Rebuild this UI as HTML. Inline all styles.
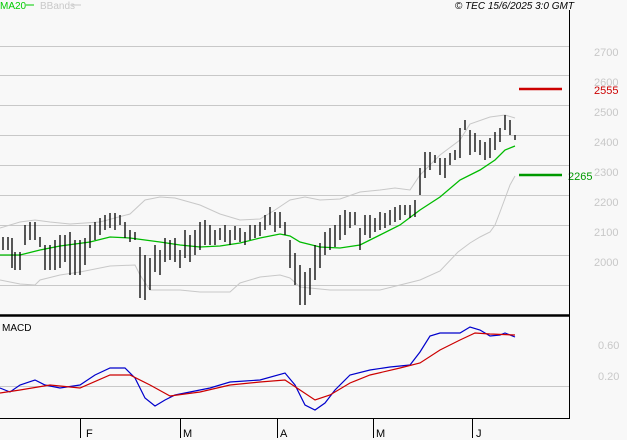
<!DOCTYPE html><html><head><style>body{margin:0;background:#f8f8f8;width:627px;height:440px;overflow:hidden}svg{display:block;font-family:"Liberation Sans",sans-serif}</style></head><body>
<svg width="627" height="440" viewBox="0 0 627 440">
<rect width="627" height="440" fill="#f8f8f8"/>
<g stroke="#c8c8c8" stroke-width="1">
<path d="M0 46.5H569M0 75.5H569M0 105.5H569M0 135.5H569M0 165.5H569M0 195.5H569M0 225.5H569M0 255.5H569M0 285.5H569M0 386.5H569"/>
</g>
<g fill="#c8c8c8" font-size="11">
<text x="594" y="56">2700</text><text x="594" y="86">2600</text><text x="594" y="116">2500</text><text x="594" y="146">2400</text><text x="594" y="176">2300</text><text x="594" y="206">2200</text><text x="594" y="236">2100</text><text x="594" y="266">2000</text>
<text x="598" y="349">0.60</text><text x="598" y="380">0.20</text>
</g>
<polyline fill="none" stroke="#c8c8c8" points="0,228 20,222 35,220 50,222 70,224 100,222 130,214 145,200 160,197 175,198 200,205 220,214 240,220 260,219 275,210 290,200 305,197 320,200 340,199 360,192 380,190 395,188 410,190 420,175 440,155 460,140 470,124 490,117 505,115 515,118"/>
<polyline fill="none" stroke="#c8c8c8" points="0,280 20,284 35,285 40,280 60,275 80,272 110,266 135,265 140,275 150,290 180,290 200,292 230,292 240,283 260,277 280,275 290,278 300,287 330,290 380,290 400,285 420,280 440,271 458,252 470,243 480,237 490,232 495,225 500,212 510,185 515,176"/>
<polyline fill="none" stroke="#00bb00" stroke-width="1.3" points="0,255 20,255 40,250 60,246 90,242 110,237 130,238 160,242 180,245 200,247 220,246 240,243 260,238 280,234 290,236 300,242 320,247 340,248 360,245 380,235 400,225 420,210 440,197 460,180 480,170 495,160 505,150 515,146"/>
<path fill="none" stroke="#000" stroke-width="1.3" d="M3 237V250M8 237V250M12 238V268M15 252V270M20 252V270M25 225V245M30 222V240M35 222V240M40 237V247M45 245V270M50 245V270M55 240V270M60 235V268M65 235V262M70 232V275M75 240V275M80 240V275M85 238V265M90 225V248M95 222V240M100 218V235M105 215V230M110 213V228M115 213V230M120 215V225M125 222V238M130 230V242M135 232V240M140 247V298M145 255V300M150 258V290M155 245V272M160 250V275M165 238V262M170 240V260M175 238V262M180 250V268M185 230V258M190 235V262M195 230V255M200 222V250M205 220V245M210 225V245M215 230V245M220 228V240M225 225V242M230 230V245M235 226V240M240 228V242M245 232V245M250 225V240M255 225V238M260 222V236M265 215V230M270 207V225M275 212V232M280 212V228M285 222V235M290 240V268M295 253V285M300 265V305M305 272V305M310 268V295M315 245V280M320 243V268M325 232V255M330 228V250M335 225V247M340 215V240M345 210V235M350 212V228M355 212V225M360 228V250M365 215V235M370 215V238M375 218V232M380 212V230M385 213V228M390 210V225M395 207V222M400 205V220M405 205V215M410 205V218M415 200V217M420 168V195M425 152V178M430 152V170M435 155V163M440 158V175M445 158V178M450 153V165M455 150V160M460 128V158M465 120V130M470 130V155M475 133V152M480 140V155M485 142V160M490 138V158M495 132V150M500 128V142M505 115V130M510 120V135M515 135V140"/>
<path stroke="#cc0000" stroke-width="2.5" d="M519 89H562"/>
<text x="594" y="94" fill="#cc0000" font-size="11">2555</text>
<path stroke="#009900" stroke-width="2.5" d="M519 175H562"/>
<text x="568" y="180" fill="#009900" font-size="11">2265</text>
<polyline fill="none" stroke="#0000cc" stroke-width="1.2" points="0,388 10,392 20,385 35,380 45,385 60,388 80,385 95,375 110,368 125,368 135,378 145,398 155,406 165,400 175,395 190,392 210,388 230,382 260,380 285,373 295,385 305,405 315,410 325,403 335,390 350,375 370,370 390,367 410,365 420,352 430,336 440,333 460,333 470,327 480,330 490,336 500,335 505,333 515,337"/>
<polyline fill="none" stroke="#cc0000" stroke-width="1.2" points="0,393 20,390 50,385 80,388 110,375 130,375 150,385 170,396 200,392 230,385 260,382 285,380 300,390 315,400 330,395 350,383 370,375 400,368 420,363 440,350 460,340 475,333 490,334 515,335"/>
<path stroke="#000" stroke-width="2.5" d="M0 315.5H570"/>
<path stroke="#000" stroke-width="1" fill="none" d="M569.5 10V418.5H0M80.5 418V438M180.5 418V438M277.5 418V438M373.5 418V438M472.5 418V438"/>
<g font-size="11" fill="#000"><text x="86" y="437">F</text><text x="183" y="437">M</text><text x="280" y="437">A</text><text x="376" y="437">M</text><text x="476" y="437">J</text></g>
<text x="2" y="331" font-size="10" fill="#000">MACD</text>
<text x="0" y="9" font-size="10" fill="#00cc00">MA20</text><path stroke="#00cc00" d="M26 5H34"/>
<text x="40" y="9" font-size="10" fill="#c8c8c8">BBands</text><path stroke="#c8c8c8" d="M72 5H81"/>
<text x="574" y="9" font-size="10" font-style="italic" fill="#000" text-anchor="end">© TEC 15/6/2025 3:0 GMT</text>
</svg></body></html>
